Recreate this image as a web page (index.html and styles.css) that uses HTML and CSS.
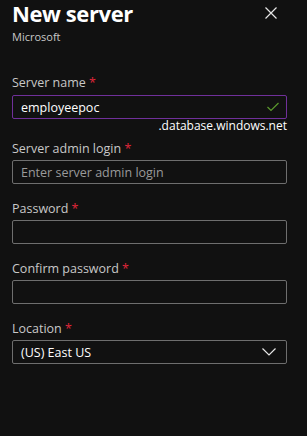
FILE: index.html
```html
<!DOCTYPE html>
<html lang="en">
<head>
    <meta charset="UTF-8">
    <meta name="viewport" content="width=device-width, initial-scale=1.0">
    <title>New server</title>
    <link rel="stylesheet" href="styles.css">
</head>
<body>
    <div class="panel">
        <div class="header">
            <h1>New server</h1>
            <button class="close" aria-label="Close">
                <svg width="12" height="12" viewBox="0 0 12 12"><path d="M0.5 0.5 L11.5 11.5 M11.5 0.5 L0.5 11.5" stroke="#e6e6e6" stroke-width="1.2" fill="none"/></svg>
            </button>
        </div>
        <div class="subtitle">Microsoft</div>

        <form class="server-form">
            <div class="form-group first">
                <label for="server-name">Server name <span class="req">*</span></label>
                <div class="field valid">
                    <input type="text" id="server-name" value="employeepoc">
                    <svg class="check" width="12" height="10" viewBox="0 0 12 10"><path d="M0.5 5 L4 8.5 L11.5 1" stroke="#5b9a2d" stroke-width="1.2" fill="none"/></svg>
                </div>
                <div class="suffix">.database.windows.net</div>
            </div>
            <div class="form-group">
                <label for="admin-login">Server admin login <span class="req">*</span></label>
                <div class="field">
                    <input type="text" id="admin-login" placeholder="Enter server admin login">
                </div>
            </div>
            <div class="form-group">
                <label for="password">Password <span class="req">*</span></label>
                <div class="field">
                    <input type="password" id="password">
                </div>
            </div>
            <div class="form-group">
                <label for="confirm">Confirm password <span class="req">*</span></label>
                <div class="field">
                    <input type="password" id="confirm">
                </div>
            </div>
            <div class="form-group">
                <label for="location">Location <span class="req">*</span></label>
                <div class="field select">
                    <span id="location" class="value">(US) East US</span>
                    <svg class="chevron" width="14" height="8" viewBox="0 0 14 8"><path d="M0.5 0.5 L7 7 L13.5 0.5" stroke="#e6e6e6" stroke-width="1.2" fill="none"/></svg>
                </div>
            </div>
        </form>
    </div>
</body>
</html>
```

FILE: styles.css
```css
html, body {
    background-color: #111111;
}
body {
    font-family: "Segoe UI", "Open Sans", sans-serif;
    margin: 0;
    color: #ffffff;
}
.panel {
    padding: 0 20px 0 12px;
}
.header {
    display: flex;
    justify-content: space-between;
    align-items: flex-start;
}
h1 {
    margin: 0;
    font-size: 22px;
    font-weight: 700;
    line-height: 26px;
    letter-spacing: -0.4px;
    color: #ffffff;
}
.close {
    background: none;
    border: none;
    padding: 0;
    margin: 7px 10px 0 0;
    cursor: pointer;
    display: flex;
}
.subtitle {
    font-size: 11px;
    color: #c8c8c8;
    line-height: 15px;
    margin-top: 3px;
}
.server-form {
    margin-top: 31px;
}
.form-group {
    margin-bottom: 17px;
}
.form-group label {
    display: block;
    font-size: 12.5px;
    line-height: 16px;
    color: #c8c8c8;
    margin-bottom: 3px;
}
.form-group.first label {
    margin-bottom: 4px;
}
.req {
    color: #e0263a;
}
.field {
    display: flex;
    align-items: center;
    height: 24px;
    box-sizing: border-box;
    border: 1px solid #6e6e6e;
    border-radius: 2px;
    padding: 0 8px;
}
.field.valid {
    border-color: #70309a;
}
.field input {
    flex: 1;
    min-width: 0;
    background: transparent;
    border: none;
    outline: none;
    padding: 0;
    font-family: inherit;
    font-size: 12.5px;
    color: #ffffff;
}
.field input::placeholder {
    color: #9a9a9a;
}
.check {
    margin-right: -1px;
}
.suffix {
    text-align: right;
    font-size: 12px;
    line-height: 16px;
    color: #ffffff;
    margin-top: -1px;
    margin-bottom: -10px;
}
.select {
    justify-content: space-between;
}
.select .value {
    font-size: 12.5px;
    color: #ffffff;
}
.chevron {
    margin-right: 2px;
}
```
